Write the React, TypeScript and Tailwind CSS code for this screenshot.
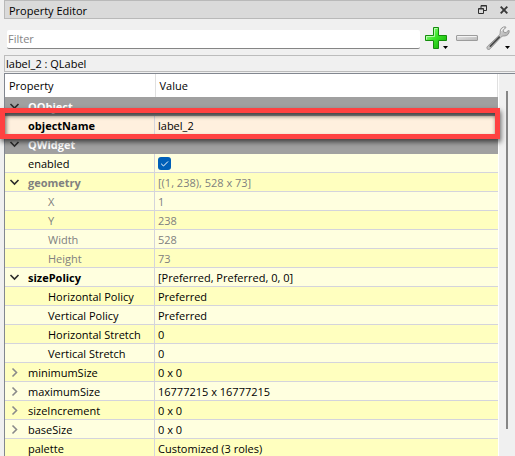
import type { ReactNode } from "react";

type Row = {
  name: string;
  value?: string;
  kind?: "group" | "check" | "selected";
  state?: "open" | "closed";
  bold?: boolean;
  muted?: boolean;
  child?: boolean;
};

const rows: Row[] = [
  { name: "QObject", kind: "group", state: "open" },
  { name: "objectName", value: "label_2", kind: "selected", bold: true },
  { name: "QWidget", kind: "group", state: "open" },
  { name: "enabled", kind: "check" },
  { name: "geometry", value: "[(1, 238), 528 x 73]", state: "open", bold: true, muted: true },
  { name: "X", value: "1", child: true, muted: true },
  { name: "Y", value: "238", child: true, muted: true },
  { name: "Width", value: "528", child: true, muted: true },
  { name: "Height", value: "73", child: true, muted: true },
  { name: "sizePolicy", value: "[Preferred, Preferred, 0, 0]", state: "open", bold: true },
  { name: "Horizontal Policy", value: "Preferred", child: true },
  { name: "Vertical Policy", value: "Preferred", child: true },
  { name: "Horizontal Stretch", value: "0", child: true },
  { name: "Vertical Stretch", value: "0", child: true },
  { name: "minimumSize", value: "0 x 0", state: "closed" },
  { name: "maximumSize", value: "16777215 x 16777215", state: "closed" },
  { name: "sizeIncrement", value: "0 x 0", state: "closed" },
  { name: "baseSize", value: "0 x 0", state: "closed" },
  { name: "palette", value: "Customized (3 roles)" },
];

function Expander({ row }: { row: Row }) {
  const open = row.state === "open";
  return (
    <button
      type="button"
      aria-label={`${open ? "Collapse" : "Expand"} ${row.name}`}
      aria-expanded={open}
      className="flex h-[18px] w-[23px] shrink-0 items-center pl-1"
    >
      <svg
        width="11"
        height="11"
        viewBox="0 0 11 11"
        fill="none"
        strokeWidth="1.6"
        className={open ? "stroke-[#2b2b2b]" : "stroke-[#8a8a8a]"}
      >
        <path d={open ? "M1.5 3L5.5 7L9.5 3" : "M3.5 1.5L7.5 5.5L3.5 9.5"} />
      </svg>
    </button>
  );
}

function CellText({ children }: { children: ReactNode }) {
  return <span className="pt-[2px] whitespace-nowrap">{children}</span>;
}

function PropertyRow({ row, index }: { row: Row; index: number }) {
  const tone = row.muted ? "text-[#808080]" : "text-black";
  const weight = row.bold ? "font-bold" : "font-normal";

  if (row.kind === "group") {
    return (
      <tr className="h-[19px] bg-[#a0a0a0]">
        <th colSpan={2} scope="colgroup" className="p-0 text-left font-bold text-white">
          <div className="flex h-[19px] items-center border-b border-[#a0a0a0]">
            <Expander row={row} />
            <CellText>{row.name}</CellText>
          </div>
        </th>
      </tr>
    );
  }

  const fill =
    row.kind === "selected" ? "bg-[#fff0de]" : index % 2 === 0 ? "bg-[#ffffbf]" : "bg-[#ffffdf]";

  return (
    <tr className={`relative h-[19px] ${fill} ${tone}`}>
      <th scope="row" className={`p-0 text-left ${weight}`}>
        <div className="flex h-[19px] items-center border-r border-b border-[#d4d4dc]">
          {row.state ? (
            <Expander row={row} />
          ) : (
            <span className={row.child ? "w-[43px] shrink-0" : "w-[23px] shrink-0"} />
          )}
          <CellText>{row.name}</CellText>
        </div>
      </th>
      <td className="p-0">
        <div className="flex h-[19px] items-center border-b border-[#d4d4dc] pl-[3px]">
          {row.kind === "check" ? (
            <span className="grid">
              <input
                type="checkbox"
                defaultChecked
                aria-label={row.name}
                className="col-start-1 row-start-1 size-[13px] appearance-none rounded-[3px] bg-[#005fb8]"
              />
              <svg
                width="13"
                height="13"
                viewBox="0 0 13 13"
                fill="none"
                className="pointer-events-none col-start-1 row-start-1 stroke-white"
              >
                <path d="M3.2 6.8L5.5 9L10 4.5" />
              </svg>
            </span>
          ) : (
            <CellText>{row.value}</CellText>
          )}
        </div>
        {row.kind === "selected" && (
          <span className="pointer-events-none absolute -top-2 -right-[2px] -bottom-1 -left-[5px] z-10 border-5 border-[#ff4141] shadow-[1px_3px_5px_rgba(0,0,0,0.6),inset_1px_3px_4px_rgba(0,0,0,0.6)]" />
        )}
      </td>
    </tr>
  );
}

function ToolButton({ label, menu, children }: { label: string; menu?: boolean; children: ReactNode }) {
  return (
    <button type="button" aria-label={label} className="relative size-6 shrink-0">
      {children}
      {menu && (
        <svg width="5" height="3" viewBox="0 0 5 3" className="absolute right-0 bottom-[1px]">
          <path d="M0 0H5L2.5 3Z" fill="#000" />
        </svg>
      )}
    </button>
  );
}

export default function App() {
  return (
    <main className="flex h-screen flex-col overflow-hidden bg-[#f0f0f0] pl-1 font-['Open_Sans','Noto_Sans',sans-serif] text-[11px] leading-4 text-black">
      <header className="flex h-[19px] shrink-0 items-center border border-r-0 border-[#b9b9b9] bg-[#dadada] pr-[7px] pl-1">
        <h1 className="flex-1 pt-[2px]">Property Editor</h1>
        <button type="button" aria-label="Float panel" className="mr-[13px]">
          <svg width="9" height="9" viewBox="0 0 9 9" fill="none" stroke="#303030">
            <path d="M3 3V.5H8.5V5.5H6M3 1H8.5M.5 3.5H5.5V8.5H.5ZM.5 4H5.5" />
          </svg>
        </button>
        <button type="button" aria-label="Close panel">
          <svg width="8" height="8" viewBox="0 0 8 8" stroke="#383838" strokeWidth="1.9">
            <path d="M.7 .7L7.3 7.3M7.3 .7L.7 7.3" />
          </svg>
        </button>
      </header>

      <div className="flex h-9 shrink-0 items-center pr-[5px] pl-[3px]">
        <input
          type="text"
          aria-label="Filter"
          placeholder="Filter"
          className="mt-1 h-[19px] min-w-0 flex-1 rounded-[2px] border-b border-[#858585] bg-white px-[1px] outline-none placeholder:text-[#858585]"
        />
        <div className="flex gap-[7px] pt-[2px] pl-1">
          <ToolButton label="Add dynamic property" menu>
            <svg width="24" height="24" viewBox="0 0 24 24">
              <defs>
                <linearGradient id="plus" x1="0" y1="0" x2="1" y2="1">
                  <stop offset="0" stopColor="#b8ffae" />
                  <stop offset=".45" stopColor="#3fe62c" />
                  <stop offset="1" stopColor="#08a800" />
                </linearGradient>
              </defs>
              <path
                d="M9.5 1.5H14.5V9.5H22.5V14.5H14.5V22.5H9.5V14.5H1.5V9.5H9.5Z"
                fill="url(#plus)"
                stroke="#148c0c"
                strokeLinejoin="round"
              />
              <path d="M10.5 10.5V2.5H13.5M2.5 13.5V10.5H10.5" fill="none" stroke="#d9ffd3" opacity=".7" />
            </svg>
          </ToolButton>
          <ToolButton label="Remove dynamic property">
            <svg width="24" height="24" viewBox="0 0 24 24">
              <defs>
                <linearGradient id="minus" x1="0" y1="0" x2="1" y2="1">
                  <stop offset="0" stopColor="#e6e6e6" />
                  <stop offset="1" stopColor="#b9b9b9" />
                </linearGradient>
              </defs>
              <rect x="1.5" y="9.5" width="21" height="5" rx=".5" fill="url(#minus)" stroke="#9c9c9c" />
              <path d="M2.5 10.5H21.5" stroke="#f3f3f3" />
            </svg>
          </ToolButton>
          <ToolButton label="Configure property editor" menu>
            <svg width="24" height="24" viewBox="0 0 24 24">
              <defs>
                <linearGradient id="wrench" x1="0" y1="0" x2="1" y2="1">
                  <stop offset="0" stopColor="#f5f5f5" />
                  <stop offset="1" stopColor="#909090" />
                </linearGradient>
              </defs>
              <path
                d="M19.5 .8C16.5 .5 14 2.8 14.2 5.8C14.2 7.2 14.1 8.3 13 9.4L1.6 20.2C.5 21.3 .7 22.7 1.6 23.2C2.5 23.8 3.6 23.5 4.4 22.6L15 11.2C16 10.1 17 10 18.4 10C21.3 10 23.5 7.6 23.2 4.8L22.5 4.1L20.1 6.7L17.7 6.2L17.2 4L20 1.6Z"
                fill="url(#wrench)"
                stroke="#8a8a8a"
                strokeWidth=".8"
              />
              <path d="M4.4 20.2L13.2 11.2" stroke="#4a4a4a" strokeWidth="1.8" strokeLinecap="round" />
              <path d="M15.6 5C15.7 3.5 16.5 2.5 18 2" fill="none" stroke="#fff" />
            </svg>
          </ToolButton>
        </div>
      </div>

      <p className="flex h-[17px] shrink-0 items-center border border-r-0 border-[#bcbcbc] pl-[1px]">
        label_2 : QLabel
      </p>

      <section className="mt-[1px] flex min-h-0 flex-1 border-t border-l border-[#828790]">
        <div className="min-w-0 flex-1 border-r border-white">
          <table className="w-full table-fixed border-collapse">
            <colgroup>
              <col className="w-[150px]" />
              <col />
            </colgroup>
            <thead>
              <tr className="h-[23px] bg-white text-left">
                <th scope="col" className="border-r border-[#e0e0e0] p-0 pl-1 font-normal">
                  Property
                </th>
                <th scope="col" className="border-r border-[#e0e0e0] p-0 pl-1 font-normal">
                  Value
                </th>
              </tr>
            </thead>
            <tbody>
              {rows.map((row, index) => (
                <PropertyRow key={row.name} row={row} index={index} />
              ))}
            </tbody>
          </table>
        </div>
        <div className="w-4 shrink-0 pt-[17px] pl-[7px]">
          <div className="h-[338px] w-[2px] bg-[#868686]" />
        </div>
      </section>
    </main>
  );
}
